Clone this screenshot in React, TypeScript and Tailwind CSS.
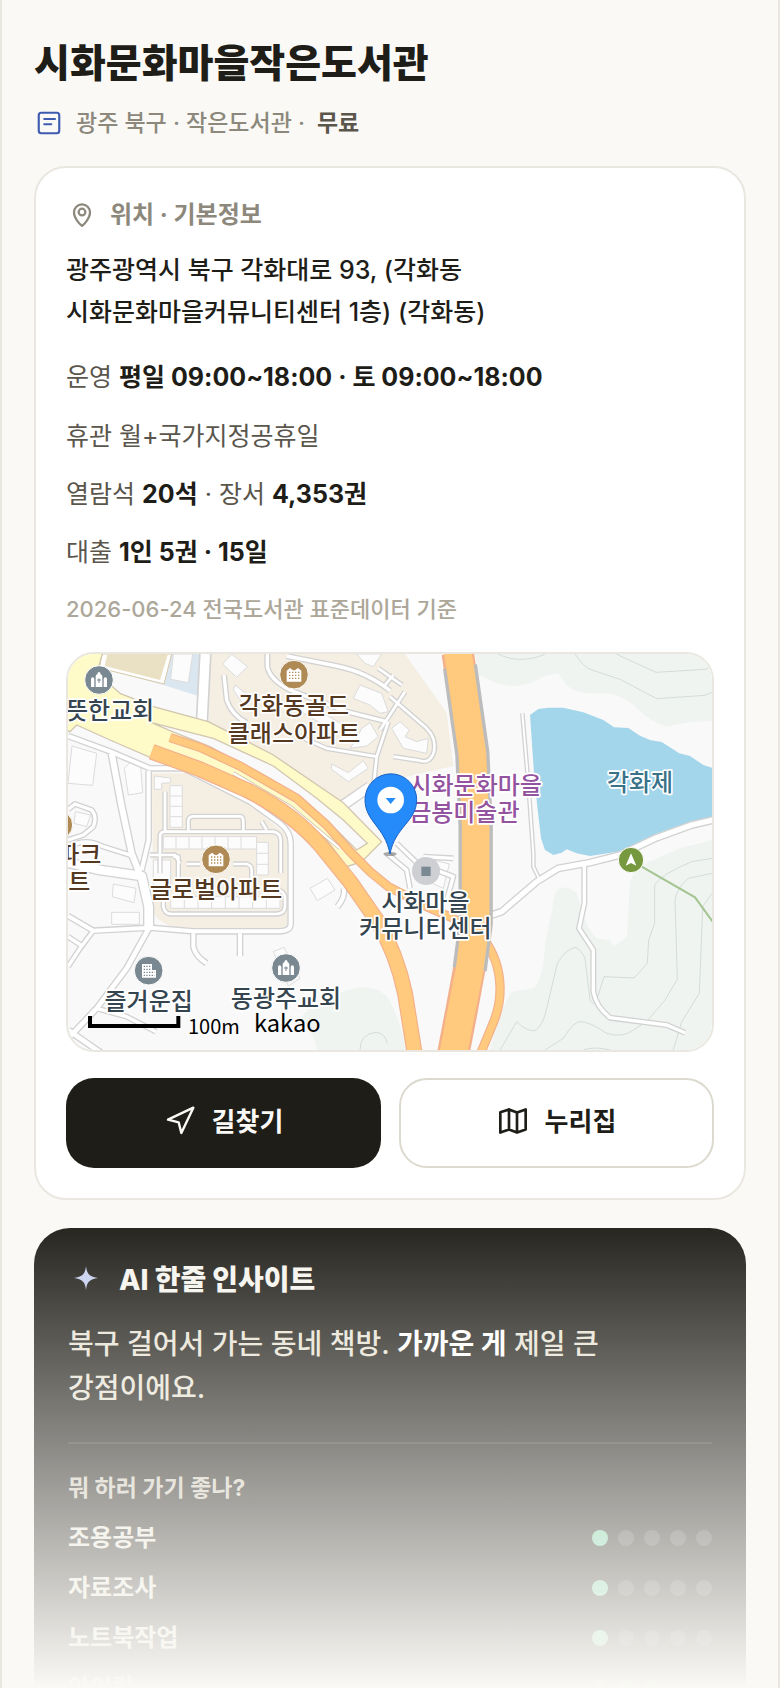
import type { ReactNode } from "react";
import { Navigation } from "lucide-react";
import clsx from "clsx";

const facts = [
  { label: "열람석", value: "20석", extraLabel: "장서", extraValue: "4,353권" },
  { label: "대출", value: "1인 5권 · 15일" },
];

const activities = [
  { name: "조용공부", score: 1 },
  { name: "자료조사", score: 1 },
  { name: "노트북작업", score: 1 },
  { name: "아이랑", score: 3 },
];

// Narrow streets, drawn twice: grey casing first, white fill on top
const streets = [
  { w: 20, d: "M24 288L150 334L270 385H370L460 430L570 485L660 550Q692 575 692 610V855Q690 872 660 874L400 874L270 863L100 872L24 828" },
  { w: 26, d: "M155 340L185 500L215 640L250 730" },
  { w: 20, d: "M266 392V600L245 690" },
  { w: 34, d: "M24 668L120 690L245 708L266 800V862" },
  { w: 22, d: "M266 866L200 985L110 1105L30 1190M24 1170L125 1240" },
  { w: 18, d: "M110 1105L200 1130L288 1175M100 872L60 925L24 980M24 890L62 915" },
  { w: 20, d: "M400 880V920Q405 948 440 970M540 880V948" },
  { w: 18, d: "M24 508L45 492L95 510Q112 530 100 560L70 585L24 600M24 625Q70 590 130 620L225 650" },
  { w: 16, d: "M315 455V575M300 700V590Q300 575 315 575H640Q662 580 662 600V700M385 575V540Q388 529 400 529H540Q550 530 550 545V575" },
  { w: 16, d: "M340 650H355V720M270 645H345L360 670M420 672H380M520 672H560Q575 676 575 690V720M310 780V800Q314 822 335 822H650Q675 820 675 798V770Q670 750 645 748" },
  { w: 16, d: "M605 545L620 570" },
  { w: 18, d: "M622 42V80Q630 120 690 150L860 215L980 245M680 48L830 78Q920 96 990 152M492 105L500 180Q515 225 560 248" },
  { w: 16, d: "M720 290L800 325L950 350M985 245L950 350L942 425M955 85L1026 135M975 135L1000 105" },
  { w: 16, d: "M1035 155L960 270M990 170L1100 265Q1130 295 1122 335Q1110 372 1080 362L1000 350" },
  { w: 34, d: "M850 495L930 440" },
  { w: 14, d: "M1387 220L1405 430L1420 640V680L1437 715" },
  { w: 24, d: "M1280 830L1325 815L1430 725L1495 685L1590 668L1680 645L1790 593L1895 555L1960 540" },
  { w: 18, d: "M1573 678V790L1557 865L1600 930V1055Q1608 1100 1650 1133L1820 1155L1875 1178" },
  { w: 18, d: "M1010 610L1070 668L1180 710L1160 780M1090 650L1180 655M980 640L1040 690L1050 745" },
  { w: 20, d: "M852 745Q855 775 832 800" },
];

const buildings = [
  "M515 42L562 80L530 112L488 72Z",
  "M900 135L965 160L985 215L960 220L930 195L880 175Z",
  "M340 42H398L385 128L332 118Z",
  "M815 372L865 398L910 362L925 385L865 425L815 388Z",
  "M890 42H965L940 80L915 70Z",
  "M525 135L570 170L555 200L520 150Z",
  "M905 265L930 248L955 290L920 318L870 325L890 295Z",
  "M705 205L740 190L850 255L835 280Z",
  "M36 318L110 340L98 436L24 430Z",
  "M193 385L212 365L242 380L248 458L205 465Z",
  "M283 408L332 414V428L305 430V448H283Z",
  "M330 437H367V562H330Z",
  "M310 590H590V627H310Z",
  "M590 607H625V705H590Z",
  "M332 770H660V805H332Z",
  "M280 660H332V745H280Z",
  "M160 732L228 745L222 788L157 770Z",
  "M155 817H238V853H155Z",
  "M995 265L1020 245L1048 270L1035 290L1070 305L1105 295L1100 340L1030 325Z",
  "M750 745L802 715L825 750L772 782Z",
  "M46 515L92 525L80 560L42 550Z",
  "M640 935L672 922L720 1015L685 1038Z",
  "M1100 655L1168 672L1150 745L1118 730Z",
];

const contours = [
  "M1315 42Q1350 60 1390 58Q1430 55 1455 42",
  "M1545 42Q1570 80 1590 88L1680 118L1790 176L1935 166L1960 155",
  "M1668 42L1788 97L1935 88L1960 78",
  "M1320 1230L1370 1145Q1400 1175 1425 1172Q1450 1155 1460 1105L1492 970Q1515 930 1545 922Q1565 930 1575 955L1590 1080Q1600 1100 1610 1080L1632 1010L1722 1014L1762 970L1766 900L1784 850V735Q1800 705 1895 665L1956 655",
  "M1455 1230L1510 1195Q1540 1145 1560 1145Q1590 1145 1640 1180Q1690 1195 1720 1170L1760 1145L1815 1080L1852 1018L1845 780Q1850 745 1885 715L1956 700",
  "M1840 1230L1865 1145L1918 1060L1928 800L1956 760",
  "M900 1230Q900 1180 950 1177Q975 1180 982 1210",
  "M1570 1230Q1600 1218 1650 1230",
];

const places = [
  { x: 117, lines: [{ t: "따뜻한교회", y: 236 }], fill: "#35454f" },
  { x: 702, lines: [{ t: "각화동골드", y: 223 }, { t: "클래스아파트", y: 305 }], fill: "#54381f" },
  { x: 1247, lines: [{ t: "시화문화마을", y: 462 }], fill: "#93539f" },
  { x: 1213, lines: [{ t: "금봉미술관", y: 542 }], fill: "#93539f" },
  { x: 1740, lines: [{ t: "각화제", y: 452 }], fill: "#3a7289" },
  { x: 468, lines: [{ t: "글로벌아파트", y: 774 }], fill: "#54381f" },
  { x: 1096, lines: [{ t: "시화마을", y: 812 }, { t: "커뮤니티센터", y: 891 }], fill: "#35454f" },
  { x: 266, lines: [{ t: "즐거운집", y: 1110 }], fill: "#35454f" },
  { x: 678, lines: [{ t: "동광주교회", y: 1102 }], fill: "#35454f" },
  { x: 58, lines: [{ t: "파크", y: 670 }, { t: "트", y: 751 }], fill: "#54381f" },
];

function ChurchMarker({ x, y }: { x: number; y: number }) {
  return (
    <g transform={`translate(${x} ${y})`}>
      <circle r="43" fill="#798891" stroke="#fff" strokeWidth="3" />
      <path
        fill="#fff"
        d="M-24 21V-2Q-24 -8 -19 -8T-14 -2V21ZM14 21V-2Q14 -8 19 -8T24 -2V21ZM-10 21V-12Q-8 -16 -5 -17Q-4 -24 0 -24T5 -17Q8 -16 10 -12V21Z"
      />
      <path d="M0 -5V9M-6 0H6" stroke="#798891" strokeWidth="3" />
    </g>
  );
}

function ApartmentMarker({ x, y }: { x: number; y: number }) {
  return (
    <g transform={`translate(${x} ${y})`}>
      <circle r="43" fill="#b08a55" stroke="#fff" strokeWidth="3" />
      <path fill="#fff" d="M-22 21V-12L-12 -20L-3 -13H3L12 -20L22 -12V21Z" />
      <path
        d="M-15 -7H17M-15 2H17M-15 11H17"
        stroke="#b08a55"
        strokeWidth="4"
        strokeDasharray="4 5"
      />
    </g>
  );
}

function LocationMap() {
  return (
    <svg
      viewBox="24 42 1932 1188"
      preserveAspectRatio="xMidYMid slice"
      className="block h-full w-full"
      role="img"
      aria-label="시화문화마을작은도서관 지도"
    >
      <rect x="24" y="42" width="1932" height="1188" fill="#f9f9f9" />

      {/* Land use */}
      <path fill="#f4eee3" d="M452 42H1035L1160 218L1180 378L1050 408L940 430L850 490L640 348L445 245Z" />
      <path fill="#f4eee3" d="M276 400H375L570 495L688 590V840Q685 865 650 865H350Q300 850 280 820Z" />
      <path fill="#dae7f0" d="M125 85L330 42H430L412 167L310 135Z" />
      <path fill="#fff" stroke="#d8c8a8" strokeWidth="3" d="M126 42H335L312 132L118 84Z" />
      <path fill="#eae0c4" d="M142 42H324L300 120L134 78Z" />
      <path
        fill="#eff4f1"
        d="M1245 42H1956V243L1890 246L1820 260Q1780 250 1735 210Q1690 160 1620 160Q1545 165 1515 130L1495 100Q1460 104 1430 120Q1370 150 1310 130L1255 105Z"
      />
      <path
        fill="#eff4f1"
        d="M1956 600L1860 625L1780 660Q1720 680 1710 730L1700 890L1662 920L1650 900L1610 895Q1580 870 1550 760Q1530 740 1505 743Q1480 745 1478 800L1455 910Q1450 1020 1420 1045L1355 1055Q1310 1130 1290 1230H1956Z"
      />
      <path fill="#eff4f1" d="M772 1230Q760 1180 725 1130Q770 1080 850 1055Q940 1020 985 1075Q1020 1140 1040 1230Z" />
      {contours.map((d) => (
        <path key={d} d={d} fill="none" stroke="#d5dcd7" strokeWidth="3" />
      ))}
      <path
        fill="#a3d6eb"
        d="M1410 225L1435 207L1465 203H1510L1570 217L1630 240L1662 262L1705 264L1740 287L1770 300L1805 306L1858 340L1890 348L1930 375L1956 383V530L1895 545L1840 563L1780 585L1730 610L1690 632L1590 648L1550 640L1520 628L1505 638L1480 645L1455 630L1443 595L1432 500L1422 400Z"
      />

      {buildings.map((d) => (
        <path key={d} d={d} fill="#fcfcfc" stroke="#dcdcdc" strokeWidth="3" />
      ))}
      <path
        d="M348 590V627M387 590V627M426 590V627M465 590V627M504 590V627M543 590V627M330 468H367M330 499H367M330 530H367M373 770V805M414 770V805M455 770V805M496 770V805M537 770V805M578 770V805M619 770V805M590 640H625M590 673H625"
        stroke="#dcdcdc"
        strokeWidth="3"
      />

      {/* Streets */}
      <path d="M436 42L425 260" stroke="#d2d2d2" strokeWidth="38" />
      <path d="M436 42L425 260" stroke="#fff" strokeWidth="28" />
      <g fill="none" strokeLinejoin="round">
        {streets.map((s) => (
          <path key={s.d} d={s.d} stroke="#d2d2d2" strokeWidth={s.w} />
        ))}
        {streets.map((s) => (
          <path key={s.d} d={s.d} stroke="#fff" strokeWidth={s.w - 8} />
        ))}
      </g>

      {/* Main roads */}
      <path
        fill="#fefbc9"
        stroke="#d2c6b0"
        strokeWidth="4"
        d="M20 38H128L115 85Q130 120 180 160L280 200L445 245L640 345L850 488L965 605L905 665L860 680L800 600L680 500L540 430L285 345L270 352L150 300L50 255L30 275L20 270Z"
      />
      <path
        fill="#f9f9f9"
        stroke="#d2c6b0"
        strokeWidth="4"
        d="M275 248L335 274L450 320L550 375L710 465L800 540L890 630L922 610L850 540L770 475L640 378L460 295Z"
      />
      <path fill="none" stroke="#d2c6b0" strokeWidth="12" d="M520 400L690 500L840 625" />
      <path fill="none" stroke="#fff" strokeWidth="7" d="M520 400L690 500L840 625" />
      <g fill="none" strokeLinejoin="round">
        <path
          stroke="#f3b08b"
          strokeWidth="28"
          d="M330 293L420 322L540 378L710 475L800 555L870 635L930 695L985 740L1100 800L1180 835L1270 895Q1318 960 1320 1040Q1322 1100 1295 1160L1262 1240"
        />
        <path
          stroke="#ffc97e"
          strokeWidth="21"
          d="M330 293L420 322L540 378L710 475L800 555L870 635L930 695L985 740L1100 800L1180 835L1270 895Q1318 960 1320 1040Q1322 1100 1295 1160L1262 1240"
        />
        <path
          stroke="#f3b08b"
          strokeWidth="48"
          d="M275 335L420 388L560 450Q700 520 785 620L870 725L950 840Q1010 940 1035 1060L1064 1240"
        />
        <path
          stroke="#ffc97e"
          strokeWidth="41"
          d="M275 335L420 388L560 450Q700 520 785 620L870 725L950 840Q1010 940 1035 1060L1064 1240"
        />
        <path stroke="#f3b08b" strokeWidth="97" d="M1193 38L1200 85M1228 985L1205 1110L1180 1240" />
        <path stroke="#bcbcbc" strokeWidth="103" d="M1200 80L1237 340L1247 560V850L1229 988" />
        <path stroke="#ffc97e" strokeWidth="83" d="M1192 30L1200 80L1237 340L1247 560V850L1229 988L1205 1110L1180 1240" />
      </g>

      {/* Trail */}
      <path d="M1745 680L1905 772L1960 848" fill="none" stroke="#a4c491" strokeWidth="6" />
      <circle cx="1713" cy="660" r="38" fill="#76993f" stroke="#fff" strokeWidth="3" />
      <path d="M1713 640L1729 677L1713 669L1697 677Z" fill="#fff" />

      {/* Place markers */}
      <ChurchMarker x={117} y={120} />
      <ChurchMarker x={678} y={984} />
      <ApartmentMarker x={702} y={104} />
      <ApartmentMarker x={468} y={658} />
      <circle cx="-5" cy="555" r="43" fill="#b08a55" stroke="#fff" strokeWidth="3" />
      <circle cx="266" cy="992" r="43" fill="#798891" stroke="#fff" strokeWidth="3" />
      <path d="M246 972H276V990H288V1013H246Z" fill="#fff" />
      <path d="M251 979H274M251 988H274M251 997H284M251 1006H284" stroke="#798891" strokeWidth="4" strokeDasharray="4 4" />
      <circle cx="1098" cy="693" r="42" fill="#cdcfd3" />
      <rect x="1084" y="680" width="28" height="28" fill="#7b8a92" />

      <g
        fontFamily='"Noto Sans CJK KR", sans-serif'
        fontSize="72"
        fontWeight="500"
        textAnchor="middle"
        stroke="#fff"
        strokeWidth="10"
        strokeLinejoin="round"
        style={{ paintOrder: "stroke" }}
      >
        {places.map((p) =>
          p.lines.map((line) => (
            <text key={line.t} x={p.x} y={line.y} fill={p.fill}>
              {line.t}
            </text>
          ))
        )}
      </g>

      {/* Library pin */}
      <ellipse cx="990" cy="642" rx="20" ry="6" fill="#555" opacity="0.5" />
      <path
        d="M990 642C975 560 915 545 915 479A77 77 0 0 1 1070 479C1070 545 1005 560 990 642Z"
        fill="#258bfb"
        stroke="#1a62c4"
        strokeWidth="3"
      />
      <circle cx="992" cy="480" r="40" fill="#fff" />
      <path d="M977 474H1007L992 492Z" fill="#258bfb" />

      {/* Scale bar and provider */}
      <path d="M90 1128V1158H355V1128" fill="none" stroke="#000" strokeWidth="12" />
      <g fontFamily='"Noto Sans CJK KR", sans-serif' fill="#000">
        <text x="384" y="1181" fontSize="60" fontWeight="400">
          100m
        </text>
        <text x="582" y="1175" fontSize="71" fontWeight="400">
          kakao
        </text>
      </g>
    </svg>
  );
}

function StrokeIcon({ className, children }: { className: string; children: ReactNode }) {
  return (
    <svg
      viewBox="0 0 24 24"
      fill="none"
      stroke="currentColor"
      strokeWidth="1.7"
      strokeLinecap="round"
      strokeLinejoin="round"
      className={clsx("shrink-0", className)}
      aria-hidden="true"
    >
      {children}
    </svg>
  );
}

function ScoreDots({ score }: { score: number }) {
  return (
    <div className="flex gap-2.5" role="img" aria-label={`${score}/5`}>
      {[1, 2, 3, 4, 5].map((n) => (
        <span
          key={n}
          className={clsx("size-4 rounded-full", n <= score ? "bg-[#74d3a4]" : "bg-white/16")}
        />
      ))}
    </div>
  );
}

function InfoCard() {
  return (
    <section className="mt-7 rounded-[32px] border-2 border-[#e9e7e0] bg-white px-[30px] pt-[31px] pb-[30px]">
      <h2 className="flex items-center gap-3 text-2xl leading-8 font-bold text-[#8c887c]">
        <StrokeIcon className="size-8">
          <path d="M12 20.2S6 15.4 6 10a6 6 0 1 1 12 0c0 5.4-6 10.200-6 10.200z" />
          <circle cx="12" cy="9.800" r="2.500" />
        </StrokeIcon>
        위치 · 기본정보
      </h2>

      <p className="mt-[18px] max-w-[480px] text-[25px] leading-[42px] font-medium break-keep">
        광주광역시 북구 각화대로 93, (각화동 시화문화마을커뮤니티센터 1층) (각화동)
      </p>

      <div className="mt-[25px] flex flex-col gap-[22px] text-[25px] leading-9 text-[#5a564c]">
        <p className="leading-[38px]">
          운영 <b className="text-[#1e1d18]">평일 09:00~18:00 · 토 09:00~18:00</b>
        </p>
        <p>휴관 월+국가지정공휴일</p>
        {facts.map((fact) => (
          <p key={fact.label}>
            {fact.label} <b className="text-[#1e1d18]">{fact.value}</b>
            {fact.extraLabel && (
              <>
                {" "}
                · {fact.extraLabel} <b className="text-[#1e1d18]">{fact.extraValue}</b>
              </>
            )}
          </p>
        ))}
        <p className="text-[22px] leading-[34px] font-medium text-[#aca799]">2026-06-24 전국도서관 표준데이터 기준</p>
      </div>

      <div className="mt-[26px] h-[400px] overflow-hidden rounded-[28px] border-2 border-[#e9e7e0]">
        <LocationMap />
      </div>

      <div className="mt-[26px] grid grid-cols-2 gap-[18px] text-[26px] font-bold">
        <button
          type="button"
          className="flex h-[90px] items-center justify-center gap-4 rounded-[28px] bg-[#1e1d18] pb-1 text-[#faf9f5]"
        >
          <Navigation className="size-8" strokeWidth={1.8} />
          길찾기
        </button>
        <a
          href="#homepage"
          className="flex h-[90px] items-center justify-center gap-4 rounded-[28px] border-2 border-[#dcd9cf] bg-white pb-1"
        >
          <StrokeIcon className="size-8">
            <path strokeWidth="2" d="M2.500 5.500L9 3.300l6 2.400 6.500-2.400v15L15 20.700l-6-2.400-6.500 2.400zM9 3.300v15M15 5.700v15" />
          </StrokeIcon>
          누리집
        </a>
      </div>
    </section>
  );
}

function InsightCard() {
  return (
    <section className="mt-7 rounded-[36px] bg-[#1e1d18] px-[34px] pt-8 pb-10">
      <h2 className="flex items-center gap-[15px] text-[28px] leading-10 font-extrabold text-[#f6f4ee]">
        <svg viewBox="0 0 36 36" className="size-9 shrink-0" aria-hidden="true">
          <path
            d="M18 4C19 12.500 21.500 14.500 30 16C21.500 17.500 19 19.500 18 28C17 19.500 14.500 17.500 6 16C14.500 14.500 17 12.500 18 4Z"
            fill="#c5cff0"
          />
        </svg>
        AI 한줄 인사이트
      </h2>
      <p className="mt-[22px] max-w-[560px] text-[28px] leading-11 font-medium break-keep text-[#e8e3d6]">
        북구 걸어서 가는 동네 책방. <b className="text-white">가까운 게</b> 제일 큰 강점이에요.
      </p>
      <hr className="mt-8 border-t-2 border-white/10" />
      <h3 className="mt-7 text-[23px] leading-8 font-bold text-[#cfcabd]">뭐 하러 가기 좋나?</h3>
      <ul className="mt-[9px] text-2xl leading-[50px] font-bold text-[#ece8dd]">
        {activities.map((activity) => (
          <li key={activity.name} className="flex items-center justify-between">
            {activity.name}
            <ScoreDots score={activity.score} />
          </li>
        ))}
      </ul>
    </section>
  );
}

export default function App() {
  return (
    <main className="relative h-screen overflow-hidden border-x-2 border-[#e9e7e0] bg-[#faf9f5] px-8 pt-[38px] font-[Inter,'Noto_Sans_CJK_KR',sans-serif] text-[#1e1d18]">
      <header>
        <h1 className="text-[39px] leading-[50px] font-extrabold">시화문화마을작은도서관</h1>
        <p className="mt-5 flex items-center gap-3 text-[23px] leading-[30px] font-medium text-[#8c887c]">
          <StrokeIcon className="size-[30px] text-[#3f5bb0]">
            <rect x="3.800" y="3.800" width="16.400" height="16.400" rx="2" />
            <path d="M8.200 8.800h8.600M8.200 13h5.600" />
          </StrokeIcon>
          <span>광주 북구 · 작은도서관 ·</span>
          <b className="text-[#5a564c]">무료</b>
        </p>
      </header>
      <InfoCard />
      <InsightCard />
      <div className="pointer-events-none absolute inset-x-0 bottom-0 h-[480px] bg-linear-to-b from-[#faf9f5]/0 to-[#faf9f5]" />
    </main>
  );
}
